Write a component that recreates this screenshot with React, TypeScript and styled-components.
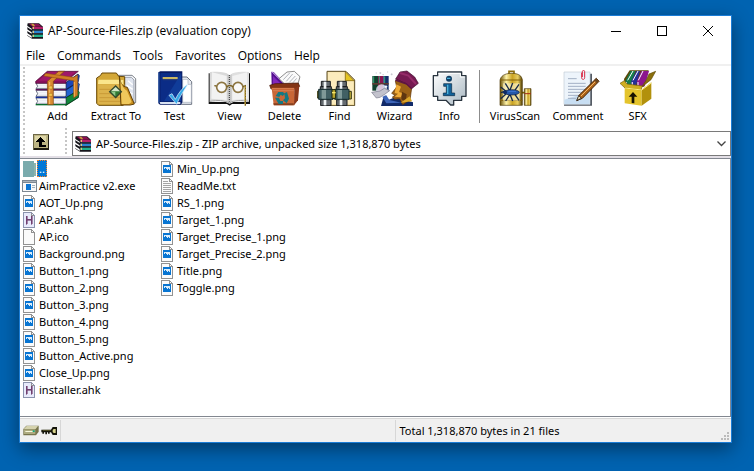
import React from "react";
import styled, { createGlobalStyle, css } from "styled-components";

const GlobalStyle = createGlobalStyle`
  *, *::before, *::after { box-sizing: border-box; }
  body {
    margin: 0;
    background: #0063b1;
    color: #000;
    font: 11px/16px "Noto Sans", "Open Sans", sans-serif;
  }
  button, select { font: inherit; color: inherit; }
  svg { display: block; flex: none; }
`;

const Desktop = styled.div`
  display: flex;
  min-height: 100vh;
  padding: 15px 22px 28px 19px;
`;

const Window = styled.main`
  flex: 1;
  min-width: 0;
  display: flex;
  flex-direction: column;
  background: #fff;
  border: 1px solid #1a7cd6;
  box-shadow: 0 6px 18px rgba(0, 0, 0, 0.42);
`;

const TitleBar = styled.header`
  display: flex;
  align-items: center;
  height: 30px;
  padding-left: 7px;
`;

const Title = styled.h1`
  flex: 1;
  margin: 0 0 0 5px;
  font-family: "Open Sans", "Noto Sans", sans-serif;
  font-size: 12px;
  font-weight: 400;
`;

const CaptionButton = styled.button`
  display: grid;
  place-items: center;
  width: 46px;
  height: 30px;
  padding: 0;
  border: 0;
  background: none;
`;

const MenuBar = styled.nav`
  display: flex;
  gap: 12px;
  height: 20px;
  padding-left: 6px;
  border-bottom: 2px solid #f0f0f0;
  font-family: "Open Sans", "Noto Sans", sans-serif;
  font-size: 12px;
`;

const MenuItem = styled.button`
  padding: 0;
  border: 0;
  background: none;
  line-height: 20px;
`;

const Toolbar = styled.div`
  display: flex;
  height: 61px;
  padding-left: 3px;
`;

const Grip = styled.span`
  flex: none;
  width: 2px;
  margin-top: 1px;
  background: repeating-linear-gradient(#c6c6c6 0 2px, transparent 2px 4px);
`;

const ToolGroup = styled.div`
  display: flex;
  padding-left: 5px;
`;

const ToolButton = styled.button<{ $width: number }>`
  display: flex;
  flex-direction: column;
  align-items: center;
  gap: 2px;
  flex: none;
  width: ${(p) => p.$width}px;
  padding: 4px 0 0;
  border: 0;
  background: none;
  white-space: nowrap;
`;

const ToolSeparator = styled.span`
  flex: none;
  width: 1px;
  margin: 4px 4px 4px 2px;
  background: #8c8c8c;
`;

const AddressBar = styled.div`
  display: flex;
  height: 31px;
  padding: 0 0 0 3px;
  border-bottom: 2px solid #e3dfe6;
`;

const UpButton = styled.button`
  flex: none;
  width: 40px;
  padding: 0 0 0 8px;
  border: 0;
  background: none;
`;

const Combo = styled.label`
  flex: 1;
  display: grid;
  grid-template-columns: 18px 1fr 18px;
  align-items: center;
  height: 25px;
  margin: 4px 0 0 5px;
  padding-left: 2px;
  border: 1px solid #7a7a7a;
`;

const ComboSelect = styled.select`
  grid-row: 1;
  grid-column: 2 / 4;
  width: 100%;
  height: 22px;
  padding: 0 20px 0 3px;
  border: 0;
  outline: 0;
  appearance: none;
  background: none;
`;

const ComboArrow = styled.span`
  grid-row: 1;
  grid-column: 3;
  pointer-events: none;
  padding-left: 5px;
`;

const FileList = styled.ul`
  flex: 1;
  display: grid;
  grid-auto-flow: column;
  grid-template-rows: repeat(14, 17px);
  grid-auto-columns: 138px;
  margin: 0 0 1px;
  padding: 1px 0 0 2px;
  border: 1px solid #828790;
  border-left: 0;
  list-style: none;
`;

const FileRow = styled.li`
  display: flex;
  align-items: center;
  white-space: nowrap;
`;

const FileName = styled.span<{ $selected?: boolean }>`
  margin-left: 1px;
  padding: 0 1px;
  line-height: 17px;
  ${(p) =>
    p.$selected &&
    css`
      margin-left: 0;
      line-height: 15px;
      color: #fff;
      background: #0078d7;
      border: 1px dotted #ff8728;
    `}
`;

const StatusBar = styled.footer`
  display: grid;
  grid-template-columns: 41px 335fr 336fr;
  height: 24px;
  border-top: 1px solid #d7d7d7;
  background: #f0f0f0;
`;

const StatusCell = styled.div<{ $divided?: boolean }>`
  display: flex;
  align-items: center;
  gap: 2px;
  margin: 1px 0;
  padding-left: 3px;
  border-right: ${(p) => (p.$divided ? "1px solid #d7d7d7" : "0")};
`;

const StatusText = styled.span`
  flex: 1;
  padding-left: 1px;
`;

const ResizeCorner = styled.span`
  align-self: flex-end;
  padding: 0 2px 1px 0;
`;

const Books = () => (
  <svg width="16" height="16" viewBox="0 0 48 48">
    <path d="M2 1h34l12 10v36H15L1 38V6z" fill="#15151b" />
    <path d="M5 2h29l11 9H16z" fill="#8a1150" />
    <path d="M12 2h7l6 8h-7z" fill="#c9a03a" />
    <path d="M0 8l14 9v4L0 12zM0 19l14 9v4L0 24zM0 30l14 9v6L0 36z" fill="#fff" />
    <path d="M16 12h32v6H16z" fill="#b4216a" />
    <path d="M16 23h32v7H16z" fill="#2b83cf" />
    <path d="M16 35h32v7H16z" fill="#22b08c" />
    <path d="M17 12h4v6h-4zM17 23h4v7h-4zM17 35h4v7h-4z" fill="#e0c47a" />
    <path d="M17 20h31M17 32h31" stroke="#3a3f52" strokeWidth="2" />
  </svg>
);

const AddIcon = () => (
  <svg width="45" height="36" viewBox="40 18 135 108">
    <path d="M132 56l37-26v25l-3 4 5 4v20l-6 5 6 4v9l-39 25z" fill="#123d22" />
    <path d="M132 56l37-26 4 5-3 18-38 24z" fill="#1a46b8" stroke="#0b1a50" strokeWidth="2" />
    <path d="M132 79l37-24 4 6-3 17-38 24z" fill="#2264d0" stroke="#0b1a50" strokeWidth="2" />
    <path d="M132 102l37-22 4 5-3 15-38 24z" fill="#12873b" stroke="#07401b" strokeWidth="2" />
    <path d="M43 57h90v17H43l5-7zM43 79h90v18H43l5-8zM43 102h90v18H43l5-8z" fill="#f6f8fc" stroke="#26304a" strokeWidth="2" />
    <path d="M50 64h80M50 70h80M50 86h80M50 92h80M50 109h80M50 115h80" stroke="#e2e6ee" strokeWidth="2" />
    <path d="M42 75h91v4H42z" fill="#5c1458" />
    <path d="M42 98h91v4H42z" fill="#19319a" />
    <path d="M42 120h91v4H42z" fill="#0b6d30" />
    <path d="M42 52l35-30h93l-37 30v6H42z" fill="#87105b" stroke="#4d0737" strokeWidth="2" />
    <path d="M50 50l30-26h82l-32 26z" fill="#a0186a" />
    <path d="M77 52l34-30h17L95 52v70H78z" fill="#d98a32" stroke="#7d430c" strokeWidth="2" />
    <path d="M72 28l84 12 12-8v62l-12 8V50L66 36z" fill="#d07e25" stroke="#86480d" strokeWidth="1.5" />
    <path d="M84 54v66" stroke="#f6bf6b" strokeWidth="3" />
    <path d="M81 66h11v9H81zM81 88h11v9H81z" fill="#f4c84c" stroke="#7d430c" />
    <path d="M158 54v44" stroke="#f6b45d" strokeWidth="3" />
  </svg>
);

const ExtractIcon = () => (
  <svg width="41" height="36" viewBox="230 18 123 108">
    <path d="M292 34h46l11 10v72h-57z" fill="#f7f8fb" stroke="#3f4650" strokeWidth="2" />
    <path d="M316 40h20l8 8v66h-28z" fill="#dfe4ee" stroke="#78808e" strokeWidth="2" />
    <path d="M326 50l14 12M322 64l18 12M320 80l20 10" stroke="#fff" strokeWidth="4" />
    <path d="M232 42l11-7 5-8h43l7 10 18 1v82l-5 4h-73l-6-6z" fill="#d3a737" stroke="#6c4b08" strokeWidth="3" />
    <path d="M237 47h57l18 1v12h-76z" fill="#fae58c" />
    <path d="M236 61h79v56l-7 4h-67l-5-5z" fill="#dcb34c" />
    <path d="M240 76h72M240 89h72M240 101h72M240 112h72" stroke="#c99b37" strokeWidth="3" />
    <path d="M300 36c3 25 9 31 24 34l21 50-12 3-28 0z" fill="#c78c1c" stroke="#604007" strokeWidth="3" />
    <path d="M303 44c5 28 15 32 20 36l14 34-8 6-22 0z" fill="#efc85c" />
    <path d="M289 66l17 17-17 18-18-18z" fill="#2f7a33" stroke="#35452e" strokeWidth="4" />
    <path d="M289 69l13 13h-27z" fill="#d3e6c8" />
    <path d="M275 83h13v14z" fill="#8ec489" />
  </svg>
);

const TestIcon = () => (
  <svg width="36" height="36" viewBox="408 18 108 108">
    <path d="M472 39h26l14 14v68h-40z" fill="#e9edf3" stroke="#6b7280" strokeWidth="3" />
    <path d="M485 46h16v15h10v54h-26z" fill="#fff" stroke="#a3acb9" strokeWidth="2" />
    <path d="M412 25l6-3h66v94l-5 6h-62l-5-4z" fill="#061a63" />
    <path d="M419 28h62v84h-62z" fill="#103c99" />
    <path d="M419 28h62l-52 84h-10z" fill="#0b2c86" />
    <path d="M414 26v90" stroke="#295db0" strokeWidth="3" />
    <path d="M425 42h45" stroke="#f1d35c" strokeWidth="5" />
    <path d="M425 47h45" stroke="#49506a" strokeWidth="2" />
    <path d="M416 114h62v6h-60z" fill="#d8e2f1" />
    <path d="M444 94l9-5 10 17c10-21 22-34 38-47-12 22-24 36-34 62z" fill="#35a9e7" stroke="#e7f6ff" strokeWidth="2" />
  </svg>
);

const ViewIcon = () => (
  <svg width="43" height="36" viewBox="24 18 129 108">
    <path d="M26 28h3v86h48l12 5 11-5h47V28h3v92H96l-7 5-8-5H26z" fill="#111" />
    <path d="M30 24c23-2 46-2 57 8v82c-15-8-36-5-57-3z" fill="#d9d9d9" />
    <path d="M147 24c-23-2-45-2-56 8v82c14-8 35-5 56-3z" fill="#dfdfdf" />
    <path d="M36 25l44 11v72l-46-4zM141 25L97 36v72l46-4z" fill="#f2f2f2" />
    <path d="M82 31l6 4 7-4v82l-7 4-6-4z" fill="#c6c6c6" />
    <path d="M88 33v80" stroke="#333" strokeWidth="3" strokeDasharray="3 3" />
    <path d="M30 112c22-3 43-4 58 5 15-9 37-8 59-5" stroke="#999" strokeWidth="3" fill="none" />
    <circle cx="65" cy="70" r="15" fill="#fafafa" stroke="#8d7643" strokeWidth="5" />
    <circle cx="114" cy="70" r="15" fill="#fafafa" stroke="#8d7643" strokeWidth="5" />
    <path d="M49 66l-6-1M80 69c5-6 14-6 19 0M129 68l7-3v60" fill="none" stroke="#7a6223" strokeWidth="4" />
    <path d="M135 67v57" stroke="#e1bd42" strokeWidth="3" strokeDasharray="5 3" />
  </svg>
);

const DeleteIcon = () => (
  <svg width="32" height="36" viewBox="206 18 96 108">
    <path d="M213 23l7 1 38 40h-44z" fill="#551092" />
    <path d="M218 36l28 28h-28z" fill="#8227bb" />
    <path d="M215 23l43 42" stroke="#e5c9f7" strokeWidth="3" />
    <path d="M236 44l24-20 22-2 17 16-6 21h-41z" fill="#fafafa" stroke="#555" strokeWidth="2" />
    <path d="M249 47l19-20M258 52l19-22M267 55l18-19M277 57l12-14" stroke="#b2b5bb" strokeWidth="3" />
    <path d="M208 64l16-5 70-2 4 10-12 8h-74z" fill="#833414" stroke="#441704" strokeWidth="2" />
    <path d="M214 72h68v52h-62z" fill="#c96737" />
    <path d="M282 73l15-8-4 44-12 15z" fill="#8b3719" />
    <path d="M214 73h68M218 80h62" stroke="#e08b5f" strokeWidth="2" />
    <path d="M219 118h61v6h-59z" fill="#86401f" />
    <path d="M226 96l8-12h14l5 6-6 6-6-4-4 7zM224 101h12l4 10h8v9h-13zM252 88l8-4 6 20-7 14-11-9 6-6z" fill="#147983" />
  </svg>
);

const Barrel = ({ x }: { x: number }) => (
  <g transform={`translate(${x} 0)`}>
    <path d="M8 52h27v16H8zM5 68h33v10H5zM6 107h31v18H6z" fill="#656b70" stroke="#171b1e" strokeWidth="3" />
    <path d="M15 53h8v71h-8z" fill="#eff3f4" />
    <path d="M0 76h43v30H0z" fill="#416064" stroke="#152c2e" strokeWidth="3" />
    <path d="M9 78h13v26H9z" fill="#7f9998" />
  </g>
);

const FindIcon = () => (
  <svg width="46" height="36" viewBox="347 18 138 108">
    <path d="M377 22h57l26 26v77h-83z" fill="#f1dda0" stroke="#5a4a22" strokeWidth="3" />
    <path d="M380 25h50v25h26v70h-76z" fill="#fbebbc" />
    <path d="M432 23l26 27h-26z" fill="#e5c521" stroke="#745808" strokeWidth="2" />
    <path d="M348 82h8v20h-8zM442 82h8v23h-8z" fill="#c4b33a" stroke="#343414" strokeWidth="3" />
    <Barrel x={352} />
    <Barrel x={400} />
    <path d="M392 77h11v26h-11z" fill="#b8a52d" stroke="#1c250e" strokeWidth="3" />
    <path d="M392 86h11" stroke="#f4e56d" strokeWidth="4" />
  </svg>
);

const WizardIcon = () => (
  <svg width="48" height="36" viewBox="32 18 144 108">
    <path d="M60 24v6M57 27h6M82 22v4M94 28v6M91 31h6M46 27h4M66 32h5" stroke="#bcbcc6" strokeWidth="2" />
    <path d="M36 36h17v44H36z" fill="#113f2d" />
    <path d="M53 36h16v44H53z" fill="#8a164f" />
    <path d="M69 36h16v44H69z" fill="#142d6b" />
    <path d="M40 37v22M57 37v22M73 37v22" stroke="#36a87a" strokeWidth="3" />
    <path d="M36 57h49v5H36z" fill="#5c3a31" />
    <circle cx="64" cy="78" r="17" fill="#e9edfa" opacity=".8" />
    <path d="M77 64v8M73 68h8" stroke="#fff" strokeWidth="3" />
    <path d="M34 85l25-4 13-8 16 7-15 11-14 9-11 2z" fill="#c3c3cd" stroke="#77778a" strokeWidth="2" />
    <path d="M68 104l6-10 10 14 20-8 54 15v11H62z" fill="#112a69" />
    <path d="M66 98l12 20 45-2-36-8-9-14z" fill="#3d65b9" />
    <path d="M105 51l8-6 42 20-6 43-22 14-9-18-15 2-7-7 8-5-10-6 15-19z" fill="#9a6016" stroke="#5b3005" strokeWidth="2" />
    <path d="M108 61l14 7-6 16 12 4-7 12-18-2 10-9-10-2z" fill="#efaa37" />
    <path d="M125 83l14 8-3 23-13-8z" fill="#5e3610" />
    <path d="M106 45l13-21 21-3 23 18 11 19-20 16-18-16z" fill="#761a52" stroke="#3d0b2b" strokeWidth="2" />
    <path d="M119 27l25 8 23 25" fill="none" stroke="#962c69" strokeWidth="6" />
    <path d="M105 48l34 12 15 14" stroke="#5d1445" strokeWidth="4" fill="none" />
    <path d="M121 116l27-19 7 15z" fill="#d9a529" />
  </svg>
);

const InfoIcon = () => (
  <svg width="35" height="36" viewBox="214 18 105 108">
    <defs>
      <linearGradient id="bubble" x2="1" y2="1">
        <stop offset="0" stopColor="#fff" />
        <stop offset="1" stopColor="#a9b8c2" />
      </linearGradient>
    </defs>
    <path d="M231 24h72v11h13v62h-13v12h-24v14h-9l-14-14h-25V97h-13V35h13z" fill="url(#bubble)" stroke="#29343f" strokeWidth="4" strokeLinejoin="round" />
    <path d="M233 28h66v11h13" fill="none" stroke="#fff" strokeWidth="3" />
    <circle cx="265" cy="44" r="9" fill="#103f66" />
    <path d="M249 59h24v28h9v8h-34v-8h9V67h-8z" fill="#126299" stroke="#082842" strokeWidth="2" />
    <path d="M261 62v28M259 43h10" stroke="#4bb3dc" strokeWidth="4" />
  </svg>
);

const VirusIcon = () => (
  <svg width="33" height="36" viewBox="60 18 99 108">
    <defs>
      <linearGradient id="brass">
        <stop offset="0" stopColor="#6a5108" />
        <stop offset=".28" stopColor="#fff4aa" />
        <stop offset=".55" stopColor="#c9a221" />
        <stop offset=".8" stopColor="#e9ce62" />
        <stop offset="1" stopColor="#513d05" />
      </linearGradient>
    </defs>
    <path d="M90 30v-8h15v8M128 86h9" fill="none" stroke="#8a6b0b" strokeWidth="5" />
    <path d="M63 49c2-12 12-21 35-21s31 9 32 21v75H63z" fill="url(#brass)" stroke="#4b3805" strokeWidth="2" />
    <path d="M63 48h67M63 109h67" stroke="#826109" strokeWidth="3" />
    <path d="M72 58h50v52H72z" fill="#f8eec2" opacity=".7" />
    <path d="M136 74h20v50h-20z" fill="url(#brass)" stroke="#4b3805" strokeWidth="2" />
    <path d="M137 89h19" stroke="#a52c18" strokeWidth="3" />
    <path d="M65 69l15 12-14 5M65 104l16-14M79 58l12 20M80 111l12-19M101 57l-8 21M101 111l-8-20M120 61l-13 19M120 109l-13-19" fill="none" stroke="#182a48" strokeWidth="4" />
    <ellipse cx="98" cy="85" rx="23" ry="8" fill="#2558aa" stroke="#0a1838" strokeWidth="2" />
    <circle cx="78" cy="85" r="6" fill="#102c64" />
    <path d="M88 82h23" stroke="#3f77d6" strokeWidth="3" />
  </svg>
);

const CommentIcon = () => (
  <svg width="43" height="36" viewBox="234 18 129 108">
    <path d="M259 29h80v96h-84v-5h4z" fill="#555b64" />
    <path d="M255 24h78v97h-78z" fill="#edf4fb" stroke="#c1cbd5" strokeWidth="2" />
    <path d="M256 107l76-25v38h-76z" fill="#c8def2" />
    <path d="M267 44h26M267 58h53M267 67h53M267 76h53M267 85h46M267 94h39M267 103h25" stroke="#a3b0c4" strokeWidth="3" />
    <path d="M308 26v15c0 7 9 7 9 0V23c0-5-7-5-7 0v16" fill="none" stroke="#d92542" strokeWidth="3" />
    <path d="M352 43l8 9-50 51-17 7 7-16z" fill="#ad6317" stroke="#3d2007" strokeWidth="3" />
    <path d="M353 49l-47 47" stroke="#f1b86e" strokeWidth="3" />
    <path d="M351 43l8 8-6 6-8-8z" fill="#68451f" />
    <path d="M299 95l8 8-13 6z" fill="#efe1bd" stroke="#1e1a14" strokeWidth="2" />
  </svg>
);

const SfxIcon = () => (
  <svg width="37" height="36" viewBox="421 18 111 108">
    <path d="M436 45l17-26h57l-14 49-57 3z" fill="#5b4808" />
    <path d="M440 51l16-30h14l-13 44h-17z" fill="#157a4b" />
    <path d="M458 51l15-30h11l-12 44h-14z" fill="#262f98" />
    <path d="M475 51l13-30h23l-13 46h-23z" fill="#8c168e" />
    <path d="M447 49l16-28M463 49l15-28M479 49l14-28" stroke="#fff" strokeWidth="3" />
    <path d="M443 54v12M461 54v12M478 54v12" stroke="#d7c7eb" strokeWidth="4" />
    <path d="M503 48l8-18 20-8-14 25-28 22z" fill="#8b700d" stroke="#5f4c04" strokeWidth="2" />
    <path d="M438 70l51 7v48l-51-7z" fill="#e4c42c" />
    <path d="M489 77l29-22v49l-29 21z" fill="#b2910c" />
    <path d="M424 58l13-8 8 10 46 6-4 12-48-6z" fill="#cfae20" stroke="#7a610a" strokeWidth="2" />
    <path d="M439 72l50 6 29-21" fill="none" stroke="#fff07c" strokeWidth="3" />
    <path d="M459 117V98h-9l13-14 13 14h-9v20z" fill="#171300" />
  </svg>
);

const UpIcon = () => (
  <svg width="16" height="16" viewBox="0 0 16 16" shapeRendering="crispEdges">
    <path d="M0 0h16v16H0z" fill="#201e12" />
    <path d="M0 0h16v1H0zM0 0h1v16H0z" fill="#6d6746" />
    <path d="M1 1h14v13H1z" fill="#bdb583" />
    <path d="M2 2h11v6H2z" fill="#ddd6a8" />
    <path d="M3 7h1V6h1V5h1V4h1V3h1v1h1v1h1v1h1v1h1v1H9v3h4v2H6V8H3z" fill="#000" />
  </svg>
);

type Kind = "folder" | "exe" | "png" | "ahk" | "blank" | "txt";

const FileIcon = ({ kind }: { kind: Kind }) => {
  if (kind === "folder")
    return (
      <svg width="15" height="17" viewBox="0 0 15 17" shapeRendering="crispEdges">
        <path d="M1 1h11v16H1z" fill="#7aabad" />
        <path d="M12 3h2v13h-2z" fill="#8eb5ae" />
      </svg>
    );
  if (kind === "exe")
    return (
      <svg width="15" height="16" viewBox="0 0 15 16" shapeRendering="crispEdges">
        <path d="M0 2h15v12H0z" fill="#7d8791" />
        <path d="M1 5h13v8H1z" fill="#f8f8f8" />
        <path d="M1 3h13v1H1z" fill="#a9b2ba" />
        <path d="M4 6h5v6H4z" fill="#0c75d3" />
        <path d="M10 7h3v1h-3zM10 9h3v1h-3z" fill="#9fb0bf" />
      </svg>
    );
  return (
    <svg width="15" height="16" viewBox="0 0 15 16" shapeRendering="crispEdges">
      <path d="M1.5.5h8l3 3v12h-11z" fill={kind === "ahk" ? "#e8eafb" : "#fbfbfb"} stroke={kind === "ahk" ? "#8b93ae" : "#929292"} />
      <path d="M9 1h1v2h2v1H9z" fill="#929292" />
      {kind === "png" && (
        <>
          <path d="M3 4h8v8H3z" fill="#0875d2" />
          <path d="M4 6h6v3H9V8H8v1H7V8H6V7H5v1H4z" fill="#d9ecfb" />
        </>
      )}
      {kind === "txt" && (
        <path d="M3 3h5v1H3zM3 5h8v1H3zM3 7h8v1H3zM3 9h8v1H3zM3 11h8v1H3zM3 13h8v1H3z" fill="#a4a4a4" />
      )}
      {kind === "ahk" && <path d="M4 4h1v3h4V4h1v8H9V8H5v4H4z" fill="#71406f" stroke="#71406f" strokeWidth=".6" />}
    </svg>
  );
};

const menus = ["File", "Commands", "Tools", "Favorites", "Options", "Help"];

const mainTools = [
  { label: "Add", Icon: AddIcon, width: 55 },
  { label: "Extract To", Icon: ExtractIcon, width: 62 },
  { label: "Test", Icon: TestIcon, width: 55 },
  { label: "View", Icon: ViewIcon, width: 55 },
  { label: "Delete", Icon: DeleteIcon, width: 55 },
  { label: "Find", Icon: FindIcon, width: 55 },
  { label: "Wizard", Icon: WizardIcon, width: 55 },
  { label: "Info", Icon: InfoIcon, width: 55 },
];

const extraTools = [
  { label: "VirusScan", Icon: VirusIcon, width: 62 },
  { label: "Comment", Icon: CommentIcon, width: 64 },
  { label: "SFX", Icon: SfxIcon, width: 55 },
];

const files: [string, Kind][] = [
  ["..", "folder"],
  ["AimPractice v2.exe", "exe"],
  ["AOT_Up.png", "png"],
  ["AP.ahk", "ahk"],
  ["AP.ico", "blank"],
  ["Background.png", "png"],
  ["Button_1.png", "png"],
  ["Button_2.png", "png"],
  ["Button_3.png", "png"],
  ["Button_4.png", "png"],
  ["Button_5.png", "png"],
  ["Button_Active.png", "png"],
  ["Close_Up.png", "png"],
  ["installer.ahk", "ahk"],
  ["Min_Up.png", "png"],
  ["ReadMe.txt", "txt"],
  ["RS_1.png", "png"],
  ["Target_1.png", "png"],
  ["Target_Precise_1.png", "png"],
  ["Target_Precise_2.png", "png"],
  ["Title.png", "png"],
  ["Toggle.png", "png"],
];

export default function App() {
  return (
    <>
      <GlobalStyle />
      <Desktop>
        <Window>
          <TitleBar>
            <Books />
            <Title>AP-Source-Files.zip (evaluation copy)</Title>
            <CaptionButton aria-label="Minimize">
              <svg width="10" height="10" shapeRendering="crispEdges">
                <path d="M0 5.5h10" stroke="#000" />
              </svg>
            </CaptionButton>
            <CaptionButton aria-label="Maximize">
              <svg width="10" height="10" shapeRendering="crispEdges">
                <path d="M.5.5h9v9h-9z" fill="none" stroke="#000" />
              </svg>
            </CaptionButton>
            <CaptionButton aria-label="Close">
              <svg width="10" height="10">
                <path d="M0 0l10 10M10 0L0 10" stroke="#000" />
              </svg>
            </CaptionButton>
          </TitleBar>
          <MenuBar>
            {menus.map((m) => (
              <MenuItem key={m}>{m}</MenuItem>
            ))}
          </MenuBar>
          <Toolbar>
            <Grip />
            <ToolGroup>
              {mainTools.map(({ label, Icon, width }) => (
                <ToolButton key={label} $width={width}>
                  <Icon />
                  {label}
                </ToolButton>
              ))}
              <ToolSeparator />
              {extraTools.map(({ label, Icon, width }) => (
                <ToolButton key={label} $width={width}>
                  <Icon />
                  {label}
                </ToolButton>
              ))}
            </ToolGroup>
          </Toolbar>
          <AddressBar>
            <Grip />
            <UpButton aria-label="Up one level">
              <UpIcon />
            </UpButton>
            <Grip />
            <Combo>
              <Books />
              <ComboSelect aria-label="Archive path">
                <option>AP-Source-Files.zip - ZIP archive, unpacked size 1,318,870 bytes</option>
              </ComboSelect>
              <ComboArrow>
                <svg width="9" height="6">
                  <path d="M.5.5l4 4 4-4" fill="none" stroke="#444" strokeWidth="1.3" />
                </svg>
              </ComboArrow>
            </Combo>
          </AddressBar>
          <FileList>
            {files.map(([name, kind]) => (
              <FileRow key={name}>
                <FileIcon kind={kind} />
                <FileName $selected={name === ".."}>{name}</FileName>
              </FileRow>
            ))}
          </FileList>
          <StatusBar>
            <StatusCell $divided>
              <svg width="16" height="11" viewBox="0 0 48 33">
                <path d="M1 12L10 2h37v18l-8 11H1z" fill="#77744c" />
                <path d="M2 12L11 3h34l-7 9z" fill="#d5d2ad" />
                <path d="M3 13h34v14H3z" fill="#aeab80" />
                <path d="M7 18h26v3H7z" fill="#f8f8dc" />
                <path d="M29 16h6v5h-6z" fill="#11a77b" />
              </svg>
              <svg width="17" height="10" viewBox="0 0 51 30">
                <path d="M1 11h29l5-8h13v24H35l-5-8h-4v4h-5v-4h-3v6h-5v-6H9v4H4v-4H1z" fill="#14140a" />
                <path d="M38 9h6v12h-6l-3-3v-6z" fill="#d9d58e" />
                <path d="M5 13h24" stroke="#77733a" strokeWidth="2" />
              </svg>
            </StatusCell>
            <StatusCell $divided />
            <StatusCell>
              <StatusText>Total 1,318,870 bytes in 21 files</StatusText>
              <ResizeCorner>
                <svg width="8" height="8" shapeRendering="crispEdges">
                  <path d="M6 0h2v2H6zM3 3h2v2H3zM6 3h2v2H6zM0 6h2v2H0zM3 6h2v2H3zM6 6h2v2H6z" fill="#bbb" />
                </svg>
              </ResizeCorner>
            </StatusCell>
          </StatusBar>
        </Window>
      </Desktop>
    </>
  );
}
